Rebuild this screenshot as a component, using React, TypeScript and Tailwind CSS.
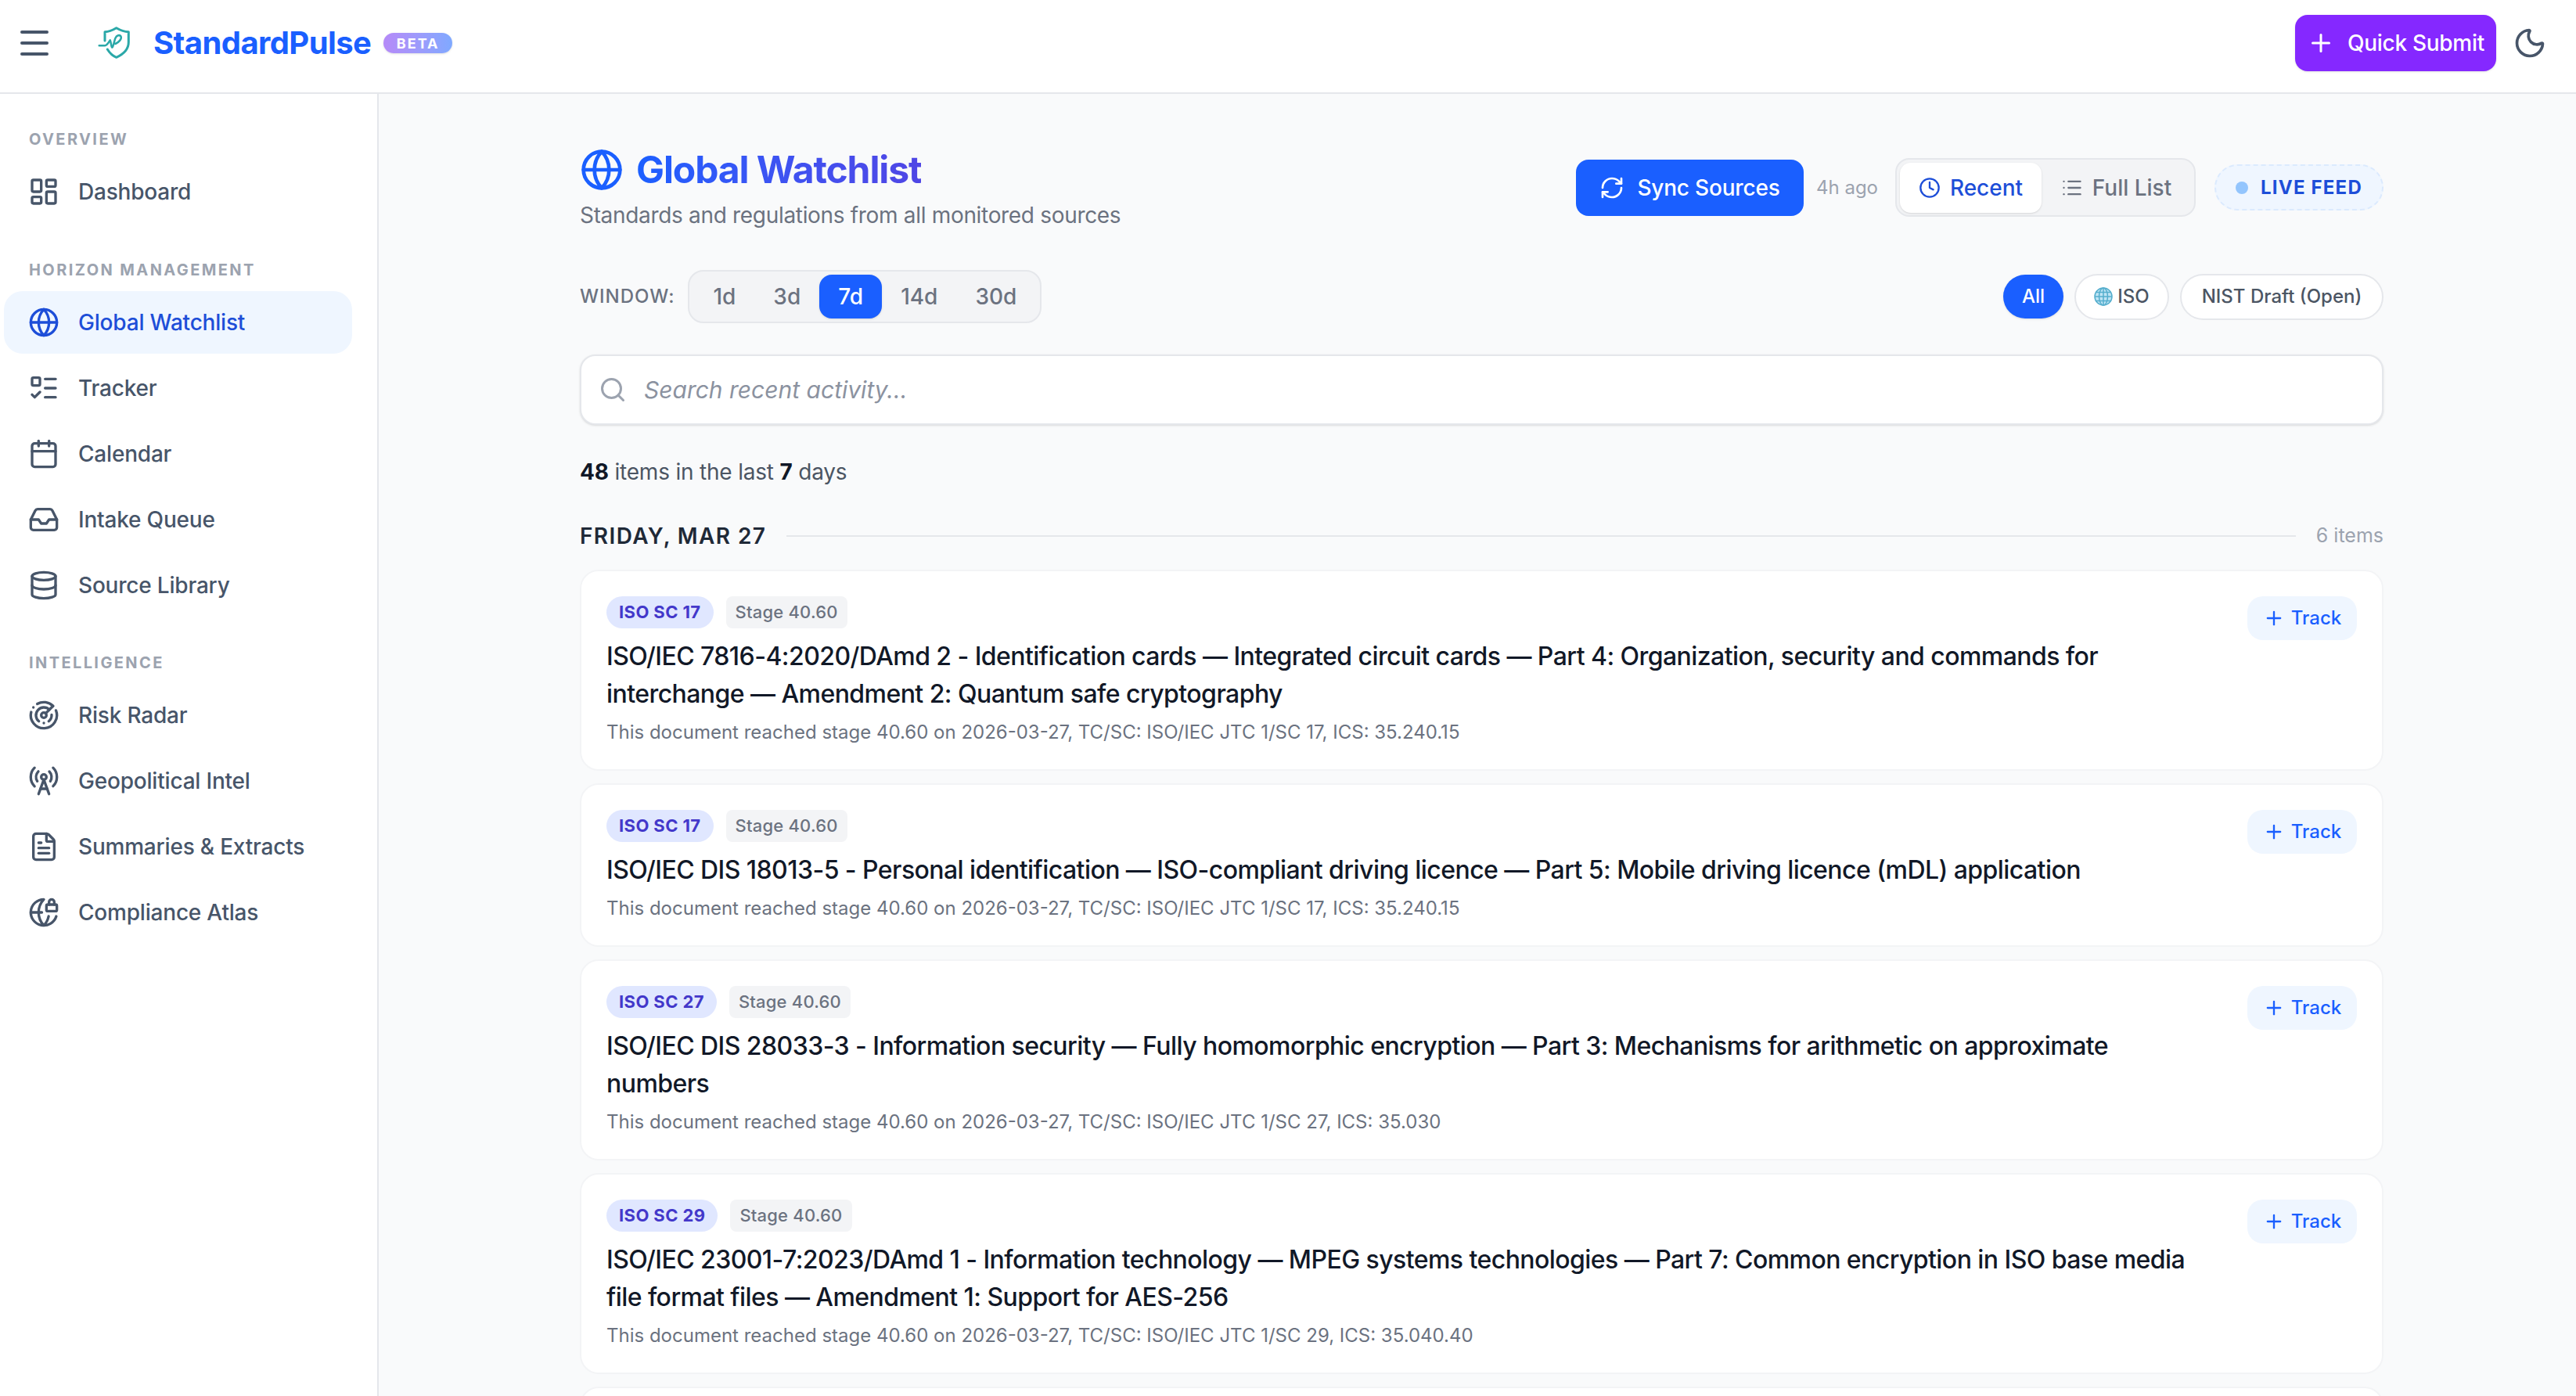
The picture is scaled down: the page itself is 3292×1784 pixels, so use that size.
import React from "react";
import {
  Menu, Plus, Moon, LayoutDashboard, Globe, ListTodo, Calendar, Inbox, Database, Radar, RadioTower, FileText, GlobeLock,
  RefreshCw, Clock, List, Search,
} from "lucide-react";

const font = { fontFamily: "Inter, 'Liberation Sans', sans-serif" };

function Logo() {
  return (
    <svg width="46" height="42" viewBox="0 0 46 42" fill="none" stroke="#2ba8a8" strokeWidth="3" strokeLinecap="round" strokeLinejoin="round">
      <path d="M9 18V6.700C15 6.500 19 4.500 23.700 1.700C28.500 4.500 33 6.500 39.300 6.700V20C39.300 30 31 36 23.700 39.300C19 37.500 15 33.500 12.300 29" />
      <path d="M1.700 24.300L9 24.300C12 24 14 20 15.700 17.300C17 20 17 26 18.300 26.700C20 26 21 18 22.300 15C24 11 28 10 29.500 12.500C31 15.500 27 20 22.500 22" strokeWidth="2.500" />
    </svg>
  );
}

function NavItem({ icon: Icon, label, active }: { icon: any; label: string; active?: boolean }) {
  return (
    <div className={`flex h-[80px] items-center gap-[24px] rounded-[24px] pl-[31px] text-[28px] font-medium tracking-[-0.2px] ${active ? "bg-[#eff6ff] text-[#1d4ed8]" : "text-[#475569]"}`}>
      <Icon size={40} strokeWidth={2} className="shrink-0" />
      <span>{label}</span>
    </div>
  );
}

function NavLabel({ children }: { children: React.ReactNode }) {
  return <div className="mb-[14px] h-[28px] pl-[32px] text-[20px] leading-[30px] font-bold tracking-[2.4px] text-[#9ca3af] uppercase">{children}</div>;
}

function Sidebar() {
  return (
    <aside className="flex w-[484px] shrink-0 flex-col border-r-2 border-[#e5e7eb] bg-white pt-[43px] pr-[32px] pl-[5px]">
      <NavLabel>Overview</NavLabel>
      <div className="mb-[45px] flex flex-col gap-[4px]">
        <NavItem icon={LayoutDashboard} label="Dashboard" />
      </div>
      <NavLabel>Horizon Management</NavLabel>
      <div className="mb-[44px] flex flex-col gap-[4px]">
        <NavItem icon={Globe} label="Global Watchlist" active />
        <NavItem icon={ListTodo} label="Tracker" />
        <NavItem icon={Calendar} label="Calendar" />
        <NavItem icon={Inbox} label="Intake Queue" />
        <NavItem icon={Database} label="Source Library" />
      </div>
      <NavLabel>Intelligence</NavLabel>
      <div className="flex flex-col gap-[4px]">
        <NavItem icon={Radar} label="Risk Radar" />
        <NavItem icon={RadioTower} label="Geopolitical Intel" />
        <NavItem icon={FileText} label="Summaries & Extracts" />
        <NavItem icon={GlobeLock} label="Compliance Atlas" />
      </div>
    </aside>
  );
}

function Card({ sc, title, desc }: { sc: string; title: string; desc: string }) {
  return (
    <div className="flex items-start gap-[56px] rounded-[24px] border-2 border-[#f3f4f6] bg-white px-[32px] pt-[32px] pb-[29px]">
      <div className="min-w-0 flex-1">
        <div className="mb-[12px] flex h-[41px] items-center gap-[16px] text-[22px]">
          <span className="flex h-[41px] items-center rounded-full bg-[#e0e7ff] px-[16px] font-bold tracking-[0.4px] text-[#4338ca]">{sc}</span>
          <span className="flex h-[41px] items-center rounded-[8px] bg-[#f3f4f6] px-[12px] font-medium tracking-[0.2px] text-[#6b7280]">Stage 40.60</span>
        </div>
        <div className="text-[32px] leading-[48px] font-medium tracking-[-0.56px] text-[#111827]">{title}</div>
        <div className="mt-[7px] text-[24px] leading-[36px] text-[#6b7280]">{desc}</div>
      </div>
      <button className="flex h-[56px] w-[140px] shrink-0 items-center justify-center gap-[8px] rounded-[20px] bg-[#eff6ff] text-[24px] font-medium text-[#1a5fff]">
        <Plus size={28} />
        Track
      </button>
    </div>
  );
}

function EmojiGlobe() {
  return (
    <svg width="24" height="24" viewBox="0 0 24 24" fill="#bfe4f4" stroke="#55aecd" strokeWidth="1.500">
      <circle cx="12" cy="12" r="11" />
      <ellipse cx="12" cy="12" rx="5.500" ry="11" fill="none" />
      <path d="M12 1v22M1 12h22M2.500 6.500h19M2.500 17.500h19" fill="none" />
    </svg>
  );
}

export default function App() {
  return (
    <div style={font} className="flex h-[1784px] flex-col overflow-hidden bg-[#f9fafb]">
      <header className="flex h-[120px] shrink-0 items-center justify-between border-b-2 border-[#e5e7eb] bg-white pr-[37px] pl-[20px]">
        <div className="flex items-center">
          <Menu size={48} strokeWidth={2} className="-mt-[8px] text-[#475569]" />
          <div className="-mt-[8px] ml-[57px]"><Logo /></div>
          <div className="-mt-[8px] ml-[25px] text-[40px] leading-[56px] font-bold tracking-[-0.6px] text-[#1a5fff]">StandardPulse</div>
          <div className="-mt-[8px] ml-[16px] flex h-[26px] w-[88px] items-center justify-center rounded-full bg-gradient-to-r from-[#b58af8] to-[#7fa9ff] text-[18px] font-bold tracking-[2px] text-white shadow-sm">BETA</div>
        </div>
        <div className="flex items-center gap-[21px]">
          <button className="flex h-[72px] w-[257px] -translate-y-[4px] items-center justify-center gap-[16px] rounded-[16px] bg-[#8528ff] text-[28px] font-medium tracking-[-0.3px] text-white shadow-sm">
            <Plus size={36} />
            Quick Submit
          </button>
          <Moon size={44} className="-translate-y-[4px] text-[#475569]" />
        </div>
      </header>
      <div className="flex min-h-0 flex-1">
        <Sidebar />
        <main className="min-w-0 flex-1 overflow-hidden pt-[69px] pr-[246px] pl-[257px]">
          <div className="flex items-start justify-between">
            <div>
              <div className="flex items-center gap-[16px]">
                <Globe size={56} strokeWidth={2} className="text-[#1a5fff]" />
                <h1 className="bg-gradient-to-r from-[#1a5fff] to-[#4f46e5] bg-clip-text text-[48px] leading-[56px] font-bold tracking-[-1.1px] text-transparent">Global Watchlist</h1>
              </div>
              <p className="mt-[10px] text-[28px] leading-[40px] tracking-[-0.32px] text-[#6b7280]">Standards and regulations from all monitored sources</p>
            </div>
            <div className="mt-[13px] flex items-center">
              <button className="flex h-[72px] w-[291px] items-center justify-center gap-[16px] rounded-[16px] bg-[#1a5fff] text-[28px] font-medium tracking-[-0.2px] text-white">
                <RefreshCw size={32} />
                Sync Sources
              </button>
              <span className="ml-[16px] text-[24px] text-[#9ca3af]">4h ago</span>
              <div className="ml-[22px] flex h-[75px] items-center rounded-[18px] border-2 border-[#e5e7eb] bg-[#f3f4f6] px-[4px]">
                <div className="flex h-[64px] w-[181px] items-center justify-center gap-[12px] rounded-[14px] bg-white text-[28px] font-medium text-[#1d4ed8] shadow-sm">
                  <Clock size={28} />
                  Recent
                </div>
                <div className="flex h-[64px] w-[191px] items-center justify-center gap-[12px] text-[28px] font-medium text-[#6b7280]">
                  <List size={28} />
                  Full List
                </div>
              </div>
              <div className="ml-[24px] flex h-[59px] w-[216px] items-center justify-center gap-[16px] rounded-full border-2 border-dashed border-[#dbeafe] bg-[#eff6ff] text-[24px] font-bold tracking-[1.200px] text-[#1d4ed8]">
                <span className="h-[16px] w-[16px] rounded-full bg-[#93c5fd]" />
                LIVE FEED
              </div>
            </div>
          </div>

          <div className="mt-[50px] flex items-center justify-between">
            <div className="flex items-center gap-[17px]">
              <span className="text-[24px] font-medium tracking-[1px] text-[#6b7280]">WINDOW:</span>
              <div className="flex h-[68px] items-center rounded-[20px] border-2 border-[#e5e7eb] bg-[#f3f4f6] px-[6px] text-[28px] font-medium text-[#6b7280]">
                <span className="px-[24px]">1d</span>
                <span className="px-[24px]">3d</span>
                <span className="flex h-[56px] items-center rounded-[16px] bg-[#1a5fff] px-[24px] text-white shadow-sm">7d</span>
                <span className="px-[24px]">14d</span>
                <span className="px-[24px]">30d</span>
              </div>
            </div>
            <div className="flex items-center gap-[14px] text-[24px] font-medium">
              <span className="flex h-[56px] w-[77px] items-center justify-center rounded-full bg-[#1a5fff] text-white shadow-sm">All</span>
              <span className="flex h-[59px] w-[121px] items-center justify-center gap-[6px] rounded-full border-2 border-[#e5e7eb] bg-white text-[#4b5563]"><EmojiGlobe />ISO</span>
              <span className="flex h-[59px] w-[260px] items-center justify-center rounded-full border-2 border-[#e5e7eb] bg-white text-[#4b5563]">NIST Draft (Open)</span>
            </div>
          </div>

          <div className="mt-[40px] flex h-[90px] items-center gap-[22px] rounded-[20px] border-2 border-[#e5e7eb] bg-white pl-[22px] shadow-sm">
            <Search size={36} className="text-[#9ca3af]" />
            <span className="text-[30px] text-[#8b92a0] italic">Search recent activity...</span>
          </div>

          <div className="mt-[40px] text-[28px] leading-[40px] tracking-[-0.2px] text-[#4b5563]">
            <b className="font-bold text-[#111827]">48</b> items in the last <b className="font-bold text-[#111827]">7</b> days
          </div>

          <div className="mt-[41px] flex h-[42px] items-center gap-[26px]">
            <span className="text-[28px] font-semibold tracking-[1.400px] text-[#1f2937]">FRIDAY, MAR 27</span>
            <div className="h-[2px] flex-1 bg-[#e5e7eb]" />
            <span className="text-[25px] text-[#9ca3af]">6 items</span>
          </div>

          <div className="mt-[22px] flex flex-col gap-[16px]">
            <Card sc="ISO SC 17" title="ISO/IEC 7816-4:2020/DAmd 2 - Identification cards — Integrated circuit cards — Part 4: Organization, security and commands for interchange — Amendment 2: Quantum safe cryptography" desc="This document reached stage 40.60 on 2026-03-27, TC/SC: ISO/IEC JTC 1/SC 17, ICS: 35.240.15" />
            <Card sc="ISO SC 17" title="ISO/IEC DIS 18013-5 - Personal identification — ISO-compliant driving licence — Part 5: Mobile driving licence (mDL) application" desc="This document reached stage 40.60 on 2026-03-27, TC/SC: ISO/IEC JTC 1/SC 17, ICS: 35.240.15" />
            <Card sc="ISO SC 27" title="ISO/IEC DIS 28033-3 - Information security — Fully homomorphic encryption — Part 3: Mechanisms for arithmetic on approximate numbers" desc="This document reached stage 40.60 on 2026-03-27, TC/SC: ISO/IEC JTC 1/SC 27, ICS: 35.030" />
            <Card sc="ISO SC 29" title="ISO/IEC 23001-7:2023/DAmd 1 - Information technology — MPEG systems technologies — Part 7: Common encryption in ISO base media file format files — Amendment 1: Support for AES-256" desc="This document reached stage 40.60 on 2026-03-27, TC/SC: ISO/IEC JTC 1/SC 29, ICS: 35.040.40" />
            <div className="h-[200px] rounded-[24px] border-2 border-[#f3f4f6] bg-white" />
          </div>
        </main>
      </div>
    </div>
  );
}
